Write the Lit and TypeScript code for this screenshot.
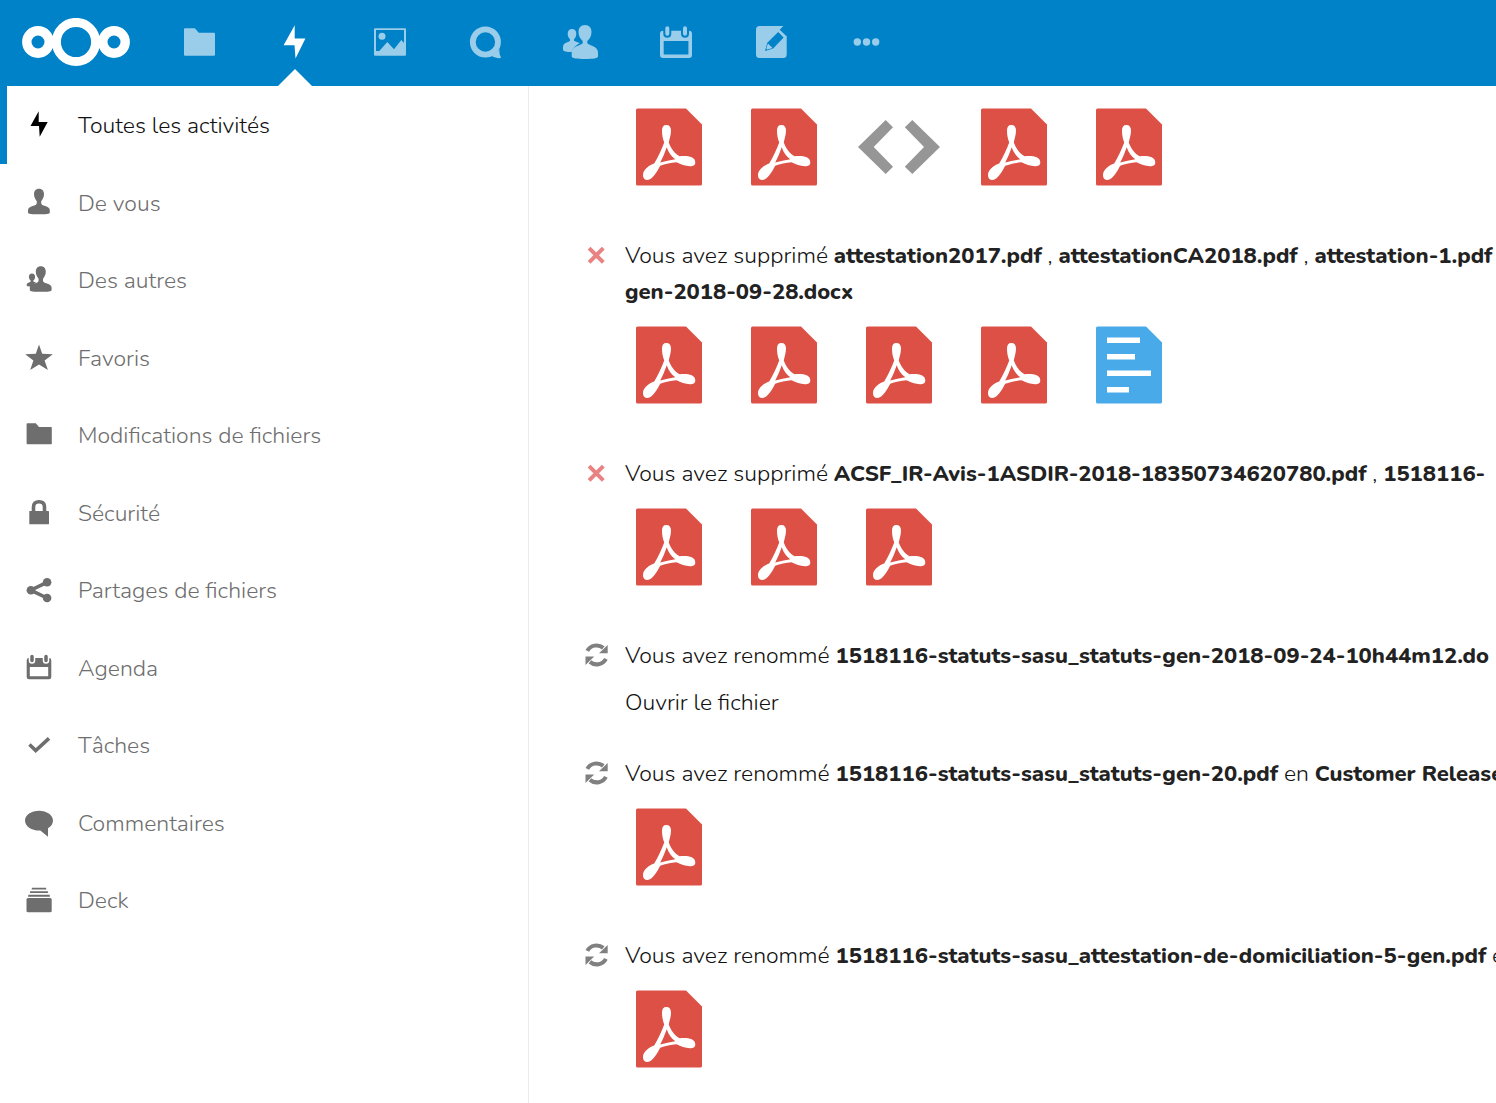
import { LitElement, html, css, svg } from "lit";
import { customElement } from "lit/decorators.js";
import { classMap } from "lit/directives/class-map.js";

/* Header icons, 36 x 36 */
const appIcons = {
  folder: svg`<path d="M3 3.3H12.8L16.8 7.8H32Q33 7.8 33 8.8V29.7Q33 30.7 32 30.7H3Q2 30.7 2 29.7V4.3Q2 3.3 3 3.3Z"/>`,
  activity: svg`<path d="M17.7.3V13.5H28.4L18.5 33.4 17.5 20.3H6.6Z"/>`,
  pictures: svg`<path fill-rule="evenodd" d="M3 3.3H33Q34 3.3 34 4.3V29.7Q34 30.7 33 30.7H3Q2 30.7 2 29.7V4.3Q2 3.3 3 3.3ZM4 5V26H7.3L15.3 17 22 24.3 29.3 15 32 18V5Z"/><circle cx="10" cy="11.3" r="3.5"/>`,
  talk: svg`<circle cx="18.4" cy="17" r="12.6" fill="none" stroke="currentColor" stroke-width="5.8"/><path d="M32.6 24.5C32 27.5 32.8 30.5 34 32.3 33.5 34 28.500 33 24.700 31Z"/>`,
  contacts: svg`<path d="M10 4C7.300 4 5.700 6 5.700 8.700 5.700 11 6.700 13 8 14.300V15.700C7 17.500 1 17 1 22V24.500C1 26.500 5 27 9.700 27 10.500 23 15 19.500 18 18.300L12 15.700V14.300C13.300 13 14.300 11 14.300 8.700 14.300 6 12.700 4 10 4Z"/><path d="M23 0C18.700 0 16.500 3 16.500 7 16.500 11 18.300 14 20.700 16V18.300C19 20.700 9.700 21 9.700 27.500V31.500C9.700 33.300 15 34 23 34 31 34 36 33.300 36 31.500V27.500C36 21 27 20.700 25.300 18.300V16C27.700 14 29.500 11 29.500 7 29.500 3 27.300 0 23 0Z"/>`,
  calendar: svg`<path fill-rule="evenodd" d="M6 5.700H32Q35 5.700 35 8.700V30Q35 33 32 33H6Q3 33 3 30V8.700Q3 5.700 6 5.700ZM6.700 16V29.400H31.400V16Z"/><rect class="peg" x="7.300" y=".3" width="6" height="11.400" rx="3"/><rect class="peg" x="25" y=".3" width="6" height="11.400" rx="3"/>`,
  notes: svg`<path fill-rule="evenodd" d="M7.500 1H31.300L27.700 4.700 34 10.700H34.700V29.500Q34.700 33 31.200 33H7.500Q4 33 4 29.500V4.500Q4 1 7.500 1ZM26.200 7 15.300 17.800 13 25.900 21.200 23.600 31.600 12.400Z"/><path d="M15.900 18.500 20.600 22.900 15.200 24.500 14.300 23.600Z"/>`,
  more: svg`<circle cx="10.300" cy="17" r="3.700"/><circle cx="19.500" cy="17" r="3.700"/><circle cx="28.700" cy="17" r="3.700"/>`,
};

/* Sidebar and activity icons, 28 x 28 */
const person = svg`<path d="M14 .7C10.800 .7 9 2.900 9 6 9 9 10.300 11.500 11.800 13.300V15.200C11.500 16.500 10 17.300 7.700 18.100 4.700 19.200 3 20.200 3 22.200V24.400C3 25.800 7 26.300 14 26.300S24.800 25.800 24.800 24.400V22.200C24.800 20.200 23.200 19.200 20.200 18.100 17.900 17.300 16.400 16.500 16.200 15.200V13.300C17.700 11.500 19 9 19 6 19 2.900 17.200 .7 14 .7Z"/>`;
const refreshArrow = svg`<path d="M4.300 9.300A10.200 9.600 0 0 1 20.300 6.300" fill="none" stroke="currentColor" stroke-width="4"/><path d="M24.700 3.300V11.700H16Z"/>`;
const icons = {
  activity: svg`<path d="M13.700 1.300V12H22.700L14.700 26.800 14 16H5.500Z"/>`,
  person,
  people: svg`<path d="M7 8.400C5 8.400 3.900 9.800 3.900 11.700 3.900 13.400 4.700 14.700 5.700 15.600V16.500C5 17.500 1.700 17.500 1.700 20V20.500Q1.700 21.600 6 21.600L11 17.500 8.300 16.500V15.600C9.300 14.700 10.100 13.400 10.100 11.700 10.100 9.800 9 8.400 7 8.400Z"/><g transform="translate(1.800 .5)">${person}</g>`,
  star: svg`<path d="M14 1.500 17.200 10.800 27.800 11.200 19.600 17.500 22.900 27 14 21.600 5.200 27 8.400 17.500 .2 11.200 10.800 10.800Z"/>`,
  folder: svg`<path d="M2.500 3.300H10.800L14 6.900H26Q26.800 6.900 26.800 7.700V23.500Q26.800 24.300 26 24.300H2.500Q1.600 24.300 1.600 23.500V4.100Q1.600 3.300 2.500 3.300Z"/>`,
  lock: svg`<path d="M8.500 14V9Q8.500 3.800 14 3.800T19.500 9V14" fill="none" stroke="currentColor" stroke-width="3.600"/><rect x="4.300" y="13" width="19.700" height="13.300" rx=".6"/>`,
  share: svg`<path d="M22 7.300 5.700 15.200 22 23" fill="none" stroke="currentColor" stroke-width="3.600"/><circle cx="5.900" cy="15.200" r="4.300"/><circle cx="22.100" cy="7.200" r="4.300"/><circle cx="22.100" cy="23" r="4.300"/>`,
  calendar: svg`<path fill-rule="evenodd" d="M4 5H24Q26.300 5 26.300 7.300V24Q26.300 26.300 24 26.300H4Q1.700 26.300 1.700 24V7.300Q1.700 5 4 5ZM4.800 14V23.200H23.200V14Z"/><rect class="peg" x="4.500" y="1" width="5" height="9" rx="2.500"/><rect class="peg" x="18.500" y="1" width="5" height="9" rx="2.500"/>`,
  check: svg`<path d="M4.500 14.500 10.700 20.500 24 8.300" fill="none" stroke="currentColor" stroke-width="3.600"/>`,
  comment: svg`<path d="M14 2.700C21.700 2.700 28 7 28 12.500 28 15.800 26 18.500 23 20.300V28.800L15.300 22.600C7 23 0 18.500 0 12.500 0 7 6.300 2.700 14 2.700Z"/>`,
  deck: svg`<path d="M7 2.700H21L21.400 4.500H6.600ZM5.200 6.200H22.800L23.200 8.100H4.800ZM3.400 9.800H24.600L25 11.700H3Z"/><rect x="1.500" y="13" width="25.200" height="14.300" rx="1.500"/>`,
  deleted: svg`<path d="M6.100 7.100 20.300 21.300M20.300 7.100 6.100 21.300" fill="none" stroke="currentColor" stroke-width="4"/>`,
  renamed: svg`<g transform="translate(0 .6)"><g>${refreshArrow}</g><g transform="rotate(180 13.600 13.300)">${refreshArrow}</g></g>`,
};

/* File previews, 88 x 88 */
const sheet = "M12.500 5.500H61L77 21.500V81Q77 82.500 75.500 82.500H12.500Q11 82.500 11 81V7Q11 5.500 12.500 5.500Z";
const previews = {
  pdf: svg`<path fill="#dd5046" d=${sheet}/><path fill="#fff" fill-rule="evenodd" d="M41.300 22C44.500 22 46 24 46 27.500 46 32 44.700 34.500 43.800 39.500 46 45.500 49.500 50.500 54.500 53.200 61 52.500 70.300 52.800 70.300 59.500 70.300 62.500 68 63.200 65 63.200 60 63.200 56 61.500 51.500 59.300 46 59.600 40 61 35.200 62.800 32.500 68 27.500 77 22.500 77 19.500 77 18 75 18 72.200 18 66.500 24 62.500 29.200 60.600 33 54 37 46 39.200 39.500 37.500 35 37 31 37 27.500 37 24 38.300 22 41.300 22ZM41.700 44.300C40 49.500 37.800 54.500 35.200 59.600 40 58.200 45 57.200 50.300 56.300 46.500 53.500 43.500 49.500 41.700 44.300Z"/>`,
  code: svg`<path fill="#969696" d="M30.700 17 38 24.300 18.700 44 38 63.700 30.700 71 3 44ZM57.300 17 85 44 57.300 71 49.800 63.700 69 44 49.800 24.300Z"/>`,
  doc: svg`<path fill="#49aae9" d=${sheet}/><path fill="#fff" d="M22 16.500H55V22H22ZM22 33H50V38.500H22ZM22 49.500H66V55H22ZM22 66H44V71.500H22Z"/>`,
};

const apps: [keyof typeof appIcons, string][] = [
  ["folder", "Fichiers"],
  ["activity", "Activité"],
  ["pictures", "Galerie"],
  ["talk", "Discussion"],
  ["contacts", "Contacts"],
  ["calendar", "Agenda"],
  ["notes", "Notes"],
];

const filters: [keyof typeof icons, string][] = [
  ["activity", "Toutes les activités"],
  ["person", "De vous"],
  ["people", "Des autres"],
  ["star", "Favoris"],
  ["folder", "Modifications de fichiers"],
  ["lock", "Sécurité"],
  ["share", "Partages de fichiers"],
  ["calendar", "Agenda"],
  ["check", "Tâches"],
  ["comment", "Commentaires"],
  ["deck", "Deck"],
];

interface Activity {
  kind?: "deleted" | "renamed";
  subject?: unknown;
  action?: string;
  files?: (keyof typeof previews)[];
}

const activities: Activity[] = [
  { files: ["pdf", "pdf", "code", "pdf", "pdf"] },
  {
    kind: "deleted",
    subject: html`Vous avez supprimé <strong>attestation2017.pdf</strong> , <strong>attestationCA2018.pdf</strong> , <strong>attestation-1.pdf</strong><br /><strong>gen-2018-09-28.docx</strong>`,
    files: ["pdf", "pdf", "pdf", "pdf", "doc"],
  },
  {
    kind: "deleted",
    subject: html`Vous avez supprimé <strong>ACSF_IR-Avis-1ASDIR-2018-18350734620780.pdf</strong> , <strong>1518116-</strong>`,
    files: ["pdf", "pdf", "pdf"],
  },
  {
    kind: "renamed",
    subject: html`Vous avez renommé <strong>1518116-statuts-sasu_statuts-gen-2018-09-24-10h44m12.do</strong>`,
    action: "Ouvrir le fichier",
  },
  {
    kind: "renamed",
    subject: html`Vous avez renommé <strong>1518116-statuts-sasu_statuts-gen-20.pdf</strong> en <strong>Customer Release</strong>`,
    files: ["pdf"],
  },
  {
    kind: "renamed",
    subject: html`Vous avez renommé <strong>1518116-statuts-sasu_attestation-de-domiciliation-5-gen.pdf</strong> e`,
    files: ["pdf"],
  },
];

@customElement("app-header")
class AppHeader extends LitElement {
  static styles = css`
    :host {
      display: flex;
      align-items: center;
      gap: 52px;
      height: 86px;
      padding-left: 22px;
      background: #0082c9;
      --peg-gap: #0082c9;
    }
    .logo,
    .app {
      display: flex;
    }
    .logo svg {
      width: 108px;
      height: 50px;
      fill: none;
      stroke: #fff;
    }
    .apps {
      display: flex;
      align-self: stretch;
      gap: 59px;
    }
    .app {
      position: relative;
      align-items: center;
      padding: 0;
      border: 0;
      background: none;
      color: #99cde9;
    }
    .app svg {
      width: 36px;
      height: 36px;
      fill: currentColor;
    }
    .peg {
      stroke: var(--peg-gap);
      stroke-width: 2;
    }
    .app.active {
      color: #fff;
    }
    .app.active::after {
      content: "";
      position: absolute;
      bottom: 0;
      left: 50%;
      margin-left: -17px;
      border: 17px solid transparent;
      border-top: 0;
      border-bottom-color: #fff;
    }
  `;
  render() {
    return html`
      <a class="logo" href="#accueil" aria-label="Accueil">
        <svg viewBox="0 0 108 50">
          <circle cx="16" cy="24" r="11.200" stroke-width="9.400" />
          <circle cx="54" cy="24" r="19.600" stroke-width="9" />
          <circle cx="92" cy="24" r="11.200" stroke-width="9.400" />
        </svg>
      </a>
      <nav class="apps">
        ${apps.map(
          ([icon, name]) => html`<a class=${classMap({ app: true, active: icon === "activity" })} href="#${icon}" aria-label=${name}>
            <svg viewBox="0 0 36 36">${appIcons[icon]}</svg>
          </a>`
        )}
        <button class="app" aria-label="Plus">
          <svg viewBox="0 0 36 36">${appIcons.more}</svg>
        </button>
      </nav>
    `;
  }
}

@customElement("app-sidebar")
class AppSidebar extends LitElement {
  static styles = css`
    :host {
      box-sizing: border-box;
      flex: none;
      width: 529px;
      border-right: 1px solid #ebebeb;
    }
    .filters {
      margin: 0;
      padding: 0;
      list-style: none;
    }
    .item {
      height: 78px;
    }
    .item:nth-child(even) {
      height: 77px;
    }
    .link {
      box-sizing: border-box;
      display: flex;
      align-items: flex-start;
      gap: 25px;
      height: 100%;
      padding: 24px 24px 0 18px;
      border-left: 7px solid transparent;
      color: #6e6e6e;
      line-height: 32px;
      text-decoration: none;
    }
    .icon {
      flex: none;
      width: 28px;
      height: 28px;
      overflow: visible;
      color: #6e6e6e;
      fill: currentColor;
    }
    .peg {
      stroke: #fff;
      stroke-width: 1.5px;
    }
    .active {
      border-left-color: #0082c9;
      color: #111;
    }
    .active .icon {
      color: #000;
    }
  `;
  render() {
    return html`<nav>
      <ul class="filters">
        ${filters.map(
          ([icon, label], i) => html`<li class="item">
            <a class=${classMap({ link: true, active: i === 0 })} href="#${icon}">
              <svg class="icon" viewBox="0 0 28 28" aria-hidden="true">${icons[icon]}</svg>
              <span>${label}</span>
            </a>
          </li>`
        )}
      </ul>
    </nav>`;
  }
}

@customElement("activity-entry")
class ActivityEntry extends LitElement {
  static properties = { entry: { attribute: false } };
  declare entry: Activity;
  static styles = css`
    :host {
      display: block;
    }
    .row {
      display: flex;
      gap: 14px;
      padding-top: 1px;
    }
    .icon {
      flex: none;
      width: 28px;
      height: 28px;
      margin-top: 3px;
      fill: currentColor;
    }
    .deleted {
      color: #e98282;
    }
    .renamed {
      color: #808080;
    }
    .subject {
      white-space: nowrap;
    }
    strong {
      color: #222;
      font-size: 22px;
      font-weight: 760;
    }
    .action {
      display: block;
      margin: 11px 0 0 42px;
      color: inherit;
      text-decoration: none;
    }
    .files {
      display: flex;
      gap: 27px;
      margin: 0 0 12px 42px;
    }
    .row + .files {
      margin-top: 11px;
    }
    .preview {
      display: flex;
    }
    .preview svg {
      width: 88px;
      height: 88px;
    }
  `;
  render() {
    const { kind, subject, action, files } = this.entry;
    return html`
      ${kind
        ? html`<div class="row">
            <svg class="icon ${kind}" viewBox="0 0 28 28" aria-hidden="true">${icons[kind]}</svg>
            <div class="subject">${subject}</div>
          </div>`
        : ""}
      ${action ? html`<a class="action" href="#fichier">${action}</a>` : ""}
      ${files
        ? html`<div class="files">
            ${files.map((f) => html`<a class="preview" href="#fichier" aria-label=${f}><svg viewBox="0 0 88 88">${previews[f]}</svg></a>`)}
          </div>`
        : ""}
    `;
  }
}

@customElement("app-root")
class AppRoot extends LitElement {
  static styles = css`
    :host {
      display: flex;
      flex-direction: column;
      min-height: 100vh;
      overflow: hidden;
      background: #fff;
      color: #111;
      font: 300 23px/36px Nunito, "Open Sans", "Noto Sans", sans-serif;
    }
    .page {
      display: flex;
      flex: 1;
    }
    .stream {
      display: flex;
      flex: 1;
      flex-direction: column;
      gap: 34px;
      min-width: 0;
      padding: 17px 0 18px 54px;
      overflow: hidden;
    }
  `;
  render() {
    return html`
      <app-header></app-header>
      <div class="page">
        <app-sidebar></app-sidebar>
        <main class="stream">${activities.map((entry) => html`<activity-entry .entry=${entry}></activity-entry>`)}</main>
      </div>
    `;
  }
}
